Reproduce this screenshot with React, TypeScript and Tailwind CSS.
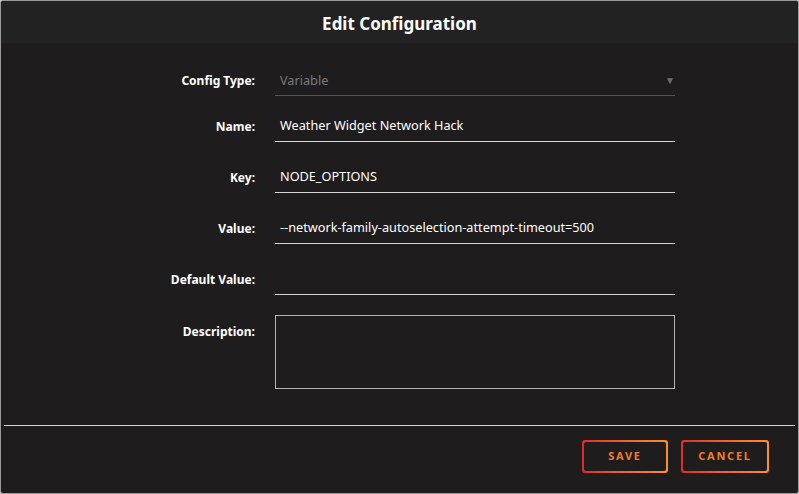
import React from 'react';

const fields = [
  { label: 'Name', value: 'Weather Widget Network Hack' },
  { label: 'Key', value: 'NODE_OPTIONS' },
  { label: 'Value', value: '--network-family-autoselection-attempt-timeout=500' },
  { label: 'Default Value', value: '' },
];

function GradientButton({ children, width }: { children: React.ReactNode; width: string }) {
  return (
    <button className={`rounded-[3px] bg-gradient-to-r from-[#e3272b] to-[#ff8f26] p-[2px] ${width}`}>
      <span className="flex h-[29px] items-center justify-center rounded-[2px] bg-[#1e1c1d] text-[11px] font-bold tracking-[0.16em] text-[#f47c28]">
        {children}
      </span>
    </button>
  );
}

export default function App() {
  return (
    <div className="h-[494px] w-[799px] bg-[#d9d9d9] font-['Noto_Sans',sans-serif]">
      <div className="flex h-full flex-col overflow-hidden rounded-[3px] border border-[#9a9a9a] bg-[#1e1c1d]">
        <div className="flex h-[42px] items-center justify-center bg-[#222222] pt-[3px]">
          <h1 className="text-[17px] font-bold text-white">Edit Configuration</h1>
        </div>

        <div className="flex flex-col pt-[23px]">
          <div className="flex items-center">
            <div className="w-[254px] text-right text-[12px] font-bold text-white">Config Type:</div>
            <div className="ml-[20px] flex h-[30px] w-[400px] items-center justify-between border-b border-[#555555] pl-[5px] pr-0 text-[12.7px] text-[#7a7a7a]">
              <span>Variable</span>
              <span className="text-[10px] text-[#6f6f6f]">▼</span>
            </div>
          </div>

          {fields.map((f, i) => (
            <div key={f.label} className={`flex items-center ${i === 0 ? 'mt-[15px]' : 'mt-[20px]'}`}>
              <div className="w-[254px] text-right text-[12px] font-bold text-white">{f.label}:</div>
              <div className="ml-[20px] flex h-[31px] w-[400px] items-center border-b border-[#d4d4d4] pl-[5px] text-[12.7px] text-white">
                {f.value}
              </div>
            </div>
          ))}

          <div className="mt-[20px] flex items-start">
            <div className="w-[254px] pt-[8px] text-right text-[12px] font-bold text-white">Description:</div>
            <div className="ml-[20px] h-[74px] w-[400px] border border-[#b5b5b5]" />
          </div>
        </div>

        <div className="mx-[3px] mt-[36px] border-t border-[#d4d4d4]" />

        <div className="flex justify-end gap-[13px] pr-[29px] pt-[14px]">
          <GradientButton width="w-[86px]">SAVE</GradientButton>
          <GradientButton width="w-[88px]">CANCEL</GradientButton>
        </div>
      </div>
    </div>
  );
}
